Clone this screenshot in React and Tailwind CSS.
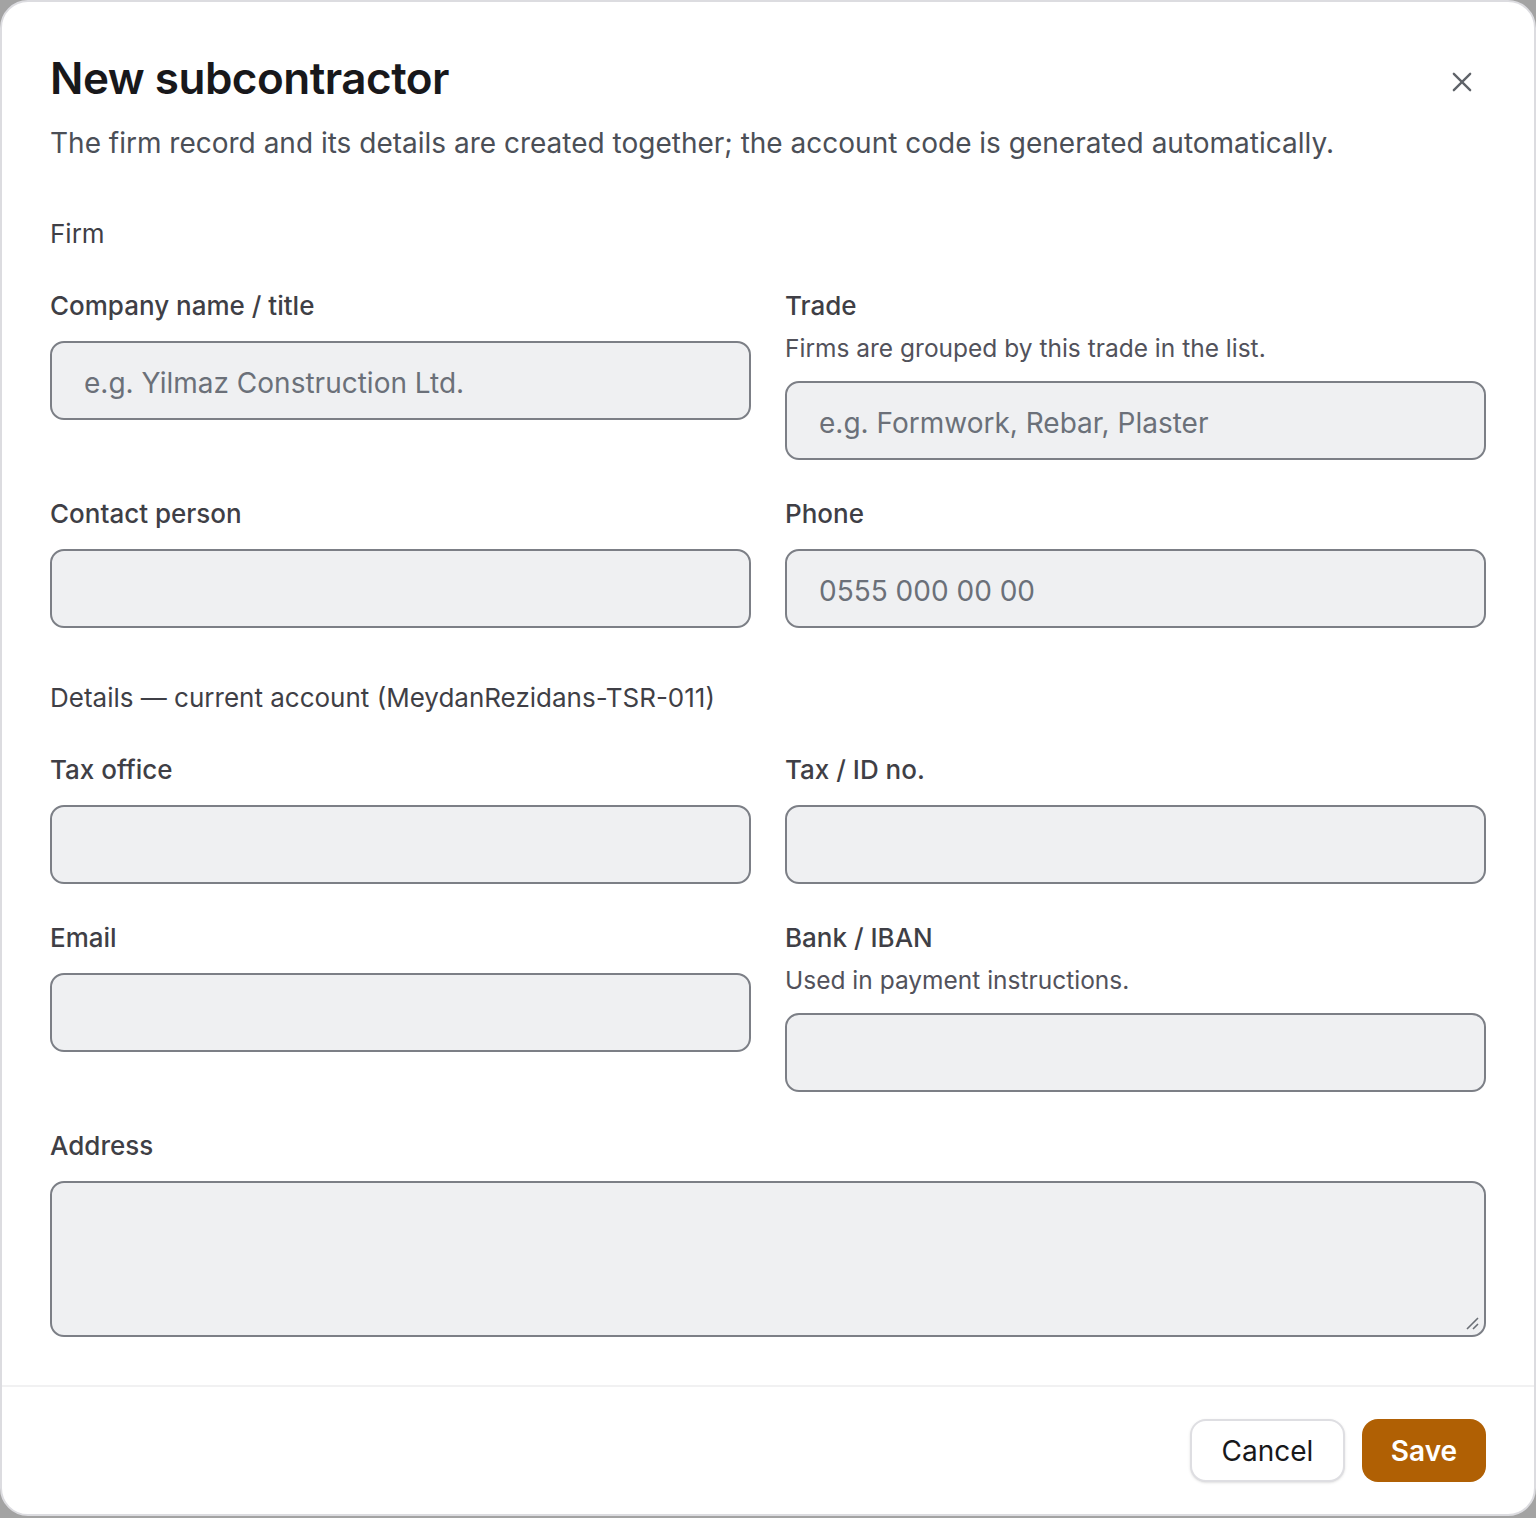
import React from "react";

function Label({ children }) {
  return <div className="text-[26px] leading-[36px] text-[#3f3f46] font-medium">{children}</div>;
}
function Hint({ children }) {
  return <div className="mt-[9px] text-[24.5px] leading-[31px] text-[#52525b]">{children}</div>;
}
function Input({ placeholder, tall }) {
  return (
    <div
      className={`mt-[17px] w-full rounded-[14px] border-2 border-[#7c7f86] bg-[#eff0f2] px-[32px] flex ${tall ? "h-[156px] items-start relative" : "h-[79px] items-center pt-[4px]"}`}
    >
      <span className="text-[28px] text-[#6b7079]">{placeholder || ""}</span>
      {tall && (
        <svg className="absolute right-[4px] bottom-[4px]" width="16" height="16" viewBox="0 0 16 16">
          <path d="M14 3 L3 14 M14 9 L9 14" stroke="#6b6f76" strokeWidth="1.6" fill="none" />
        </svg>
      )}
    </div>
  );
}
function Field({ label, hint, placeholder }) {
  return (
    <div className="flex flex-col">
      <Label>{label}</Label>
      {hint && <Hint>{hint}</Hint>}
      <Input placeholder={placeholder} />
    </div>
  );
}
function Section({ children }) {
  return <div className="text-[26px] leading-[36px] text-[#3f3f46]">{children}</div>;
}

export default function App() {
  return (
    <div className="w-[1536px] h-[1518px] overflow-hidden bg-[#a3a3a3]" style={{ fontFamily: "Inter, 'Noto Sans', sans-serif" }}>
      <div className="h-[1516px] w-full rounded-[28px] bg-white border-2 border-[#dcdce0] flex flex-col">
        <div className="flex-1 px-[48px] pt-[46px]">
          <div className="flex items-start justify-between">
            <h1 className="text-[44px] leading-[60px] font-semibold text-[#18181b] tracking-[-0.5px]">New subcontractor</h1>
            <button className="mt-[20px] mr-[10px] text-[#5f6369]">
              <svg width="28" height="28" viewBox="0 0 24 24" fill="none" stroke="currentColor" strokeWidth="2" strokeLinecap="round">
                <path d="M5 5 L19 19 M19 5 L5 19" />
              </svg>
            </button>
          </div>
          <p className="mt-[15px] text-[28px] leading-[40px] text-[#4b4f57]">
            The firm record and its details are created together; the account code is generated automatically.
          </p>

          <div className="mt-[53px]">
            <Section>Firm</Section>
          </div>
          <div className="mt-[36px] grid grid-cols-2 gap-x-[34px] gap-y-[36px]">
            <Field label="Company name / title" placeholder="e.g. Yilmaz Construction Ltd." />
            <Field label="Trade" hint="Firms are grouped by this trade in the list." placeholder="e.g. Formwork, Rebar, Plaster" />
            <Field label="Contact person" />
            <Field label="Phone" placeholder="0555 000 00 00" />
          </div>

          <div className="mt-[52px]">
            <Section>Details — current account (MeydanRezidans-TSR-011)</Section>
          </div>
          <div className="mt-[36px] grid grid-cols-2 gap-x-[34px] gap-y-[36px]">
            <Field label="Tax office" />
            <Field label="Tax / ID no." />
            <Field label="Email" />
            <Field label="Bank / IBAN" hint="Used in payment instructions." />
          </div>
          <div className="mt-[36px] flex flex-col">
            <Label>Address</Label>
            <Input tall />
          </div>
        </div>
        <div className="border-t-2 border-[#f1f1f2] px-[48px] pt-[32px] pb-[32px] flex justify-end gap-[17px]">
          <button className="h-[63px] w-[155px] rounded-[16px] border-2 border-[#dedee2] bg-white text-[28px] text-[#18181b] shadow-sm">Cancel</button>
          <button className="h-[63px] w-[124px] rounded-[16px] bg-[#b06004] text-[28px] font-semibold text-white">Save</button>
        </div>
      </div>
    </div>
  );
}
